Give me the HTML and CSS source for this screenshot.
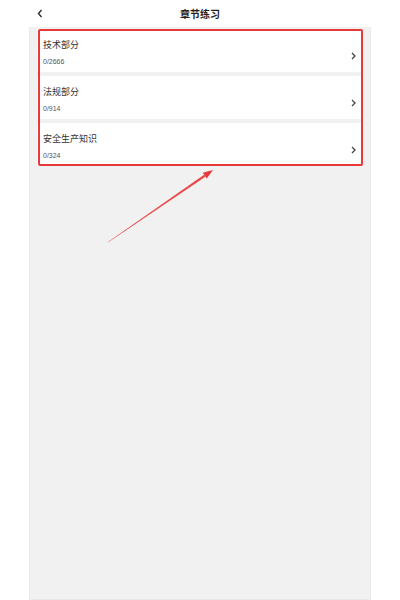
FILE: index.html
```html
<!DOCTYPE html>
<html lang="zh">
<head>
<meta charset="utf-8">
<link rel="stylesheet" href="styles.css">
</head>
<body>
<div class="phone">
  <header class="topbar">
    <svg class="back" width="6" height="9" viewBox="0 0 6 9"><polyline points="4.5,1 1.5,4.5 4.5,8" fill="none" stroke="#333" stroke-width="1.5"/></svg>
    <h1 class="title">章节练习</h1>
  </header>
  <main class="content">
    <ul class="list">
      <li class="item">
        <div class="texts"><div class="name">技术部分</div><div class="count">0/2666</div></div>
        <svg class="chev" width="5" height="8" viewBox="0 0 5 8"><polyline points="1,1 4,4 1,7" fill="none" stroke="#444" stroke-width="1.3"/></svg>
      </li>
      <li class="item">
        <div class="texts"><div class="name">法规部分</div><div class="count">0/914</div></div>
        <svg class="chev" width="5" height="8" viewBox="0 0 5 8"><polyline points="1,1 4,4 1,7" fill="none" stroke="#444" stroke-width="1.3"/></svg>
      </li>
      <li class="item">
        <div class="texts"><div class="name">安全生产知识</div><div class="count">0/324</div></div>
        <svg class="chev" width="5" height="8" viewBox="0 0 5 8"><polyline points="1,1 4,4 1,7" fill="none" stroke="#444" stroke-width="1.3"/></svg>
      </li>
    </ul>
    <div class="highlight"></div>
    <svg class="arrow" width="120" height="80" viewBox="0 0 120 80">
      <polygon points="0,73 96.07,5.67 97.43,7.65 0.3,73.3" fill="#e8383a" opacity="0.92"/>
      <polygon points="105,1 94.77,3.77 98.73,9.55" fill="#e8383a"/>
    </svg>
  </main>
</div>
</body>
</html>
```
FILE: styles.css
```css
* { box-sizing: border-box; }
html, body { margin: 0; padding: 0; background: #fff; }
body { font-family: "Noto Sans CJK SC", "Liberation Sans", sans-serif; }
.phone {
  width: 342px;
  height: 600px;
  margin: 0 auto;
  display: flex;
  flex-direction: column;
}
.topbar {
  height: 27px;
  flex: none;
  display: flex;
  align-items: center;
  justify-content: center;
  position: relative;
  background: #fff;
}
.back { position: absolute; left: 8px; top: 9px; }
.title {
  margin: 0;
  font-size: 10px;
  font-weight: bold;
  color: #222;
  line-height: 1;
}
.content {
  flex: 1;
  background: #f1f1f1;
  border-left: 1px solid #e9e9e9;
  border-right: 1px solid #e9e9e9;
  border-bottom: 1px solid #e9e9e9;
  padding: 2px 8px 0 7px;
  position: relative;
}
.list { list-style: none; margin: 0; padding: 0; display: flex; flex-direction: column; gap: 4px; }
.item {
  height: 43px;
  background: #fff;
  display: flex;
  align-items: center;
  padding: 0 6px 0 6px;
}
.texts { flex: 1; display: flex; flex-direction: column; gap: 8px; padding-top: 4px; }
.name { font-size: 9px; color: #333; line-height: 11px; }
.count { font-family: "Liberation Sans", sans-serif; font-size: 7px; color: #555; line-height: 8px; }
.chev { margin-top: 10px; }
.highlight {
  position: absolute;
  left: 8px;
  top: 2px;
  width: 325px;
  height: 137px;
  border: 2px solid #e8383a;
  border-radius: 2px;
}
.arrow { position: absolute; left: 78px; top: 142px; }
```
